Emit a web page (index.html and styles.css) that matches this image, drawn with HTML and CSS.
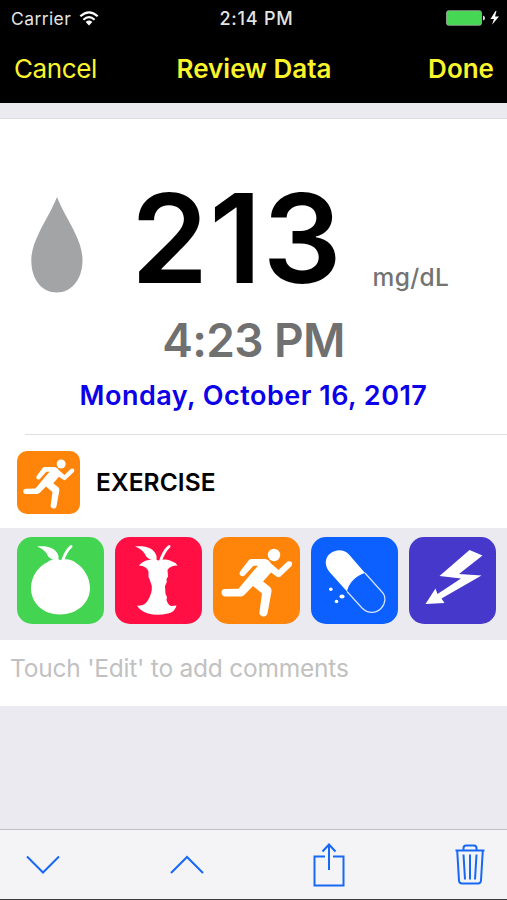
FILE: index.html
```
<!DOCTYPE html>
<html lang="en">
<head>
    <meta charset="UTF-8">
    <meta name="viewport" content="width=device-width, initial-scale=1.0">
    <title>Review Data</title>
    <link rel="stylesheet" href="styles.css">
</head>
<body>

    <!-- Shared runner icon -->
    <svg width="0" height="0" class="defs">
        <symbol id="runner" viewBox="0 0 87 87">
            <circle cx="61" cy="18" r="6.200"/>
            <path d="M38 22 L52 22 Q56 22.500 58 26.500 L65.500 33 L74.500 24.500 Q77 23.500 79 25.500 Q79.500 28 78 29.500 L67.500 39.500 Q65.500 41 63.500 39.500 L58 35.500 L50 44.500 L57 50 Q58.800 52 58.500 54.500 L54.500 76.500 Q53.500 80 49.500 79.500 Q46 78.500 46.500 75 L49 56.500 L40 49 L31.500 57.800 Q30 59.300 28 59.500 L12 59.500 Q8.500 59 8.500 55.500 Q8.500 52.300 12 52 L25.500 51.700 L39.500 35 L45 28.700 L40.500 28.700 L31.500 38.500 Q29.500 40 27.500 38.500 Q25.500 36.500 27.500 34 L35.500 23.500 Q36.500 22.200 38 22 Z"/>
        </symbol>
    </svg>

    <div class="status-bar">
        <div class="carrier">
            <span class="carrier-name">Carrier</span>
            <svg class="wifi" width="20" height="15" viewBox="0 0 20 15">
                <path d="M1.300 5.200 Q10 -2.600 18.700 5.200 M4.400 8.700 Q10 3.600 15.600 8.700" fill="none" stroke="#fff" stroke-width="2.200"/>
                <path d="M6.700 11 Q10 8.200 13.300 11 L10 14.400 Z" fill="#fff"/>
            </svg>
        </div>
        <span class="clock">2:14 PM</span>
        <svg class="battery" width="54" height="18" viewBox="0 0 54 18">
            <rect x="0.500" y="1.700" width="35" height="14.600" rx="2" fill="#46d755" stroke="#aeb8ae" stroke-width="0.700"/>
            <path d="M37 6.500 Q39 7 39 9 Q39 11 37 11.500 Z" fill="#ddd"/>
            <path d="M49.500 2 L44.500 9.900 L48 9.900 L46 15.800 L53 7.500 L49 7.500 L50.500 2 Z" fill="#fff"/>
        </svg>
    </div>

    <div class="nav-bar">
        <span class="cancel">Cancel</span>
        <span class="title">Review Data</span>
        <span class="done">Done</span>
    </div>

    <div class="card">
        <div class="reading">
            <svg class="drop" width="52" height="97" viewBox="0 0 52 97">
                <path d="M26 0 C31 13 39 25 44 36 C49 46 51.500 55 51.500 63 C51.500 83 40 95.500 26 95.500 C11 95.500 0.300 83 0.300 63 C0.300 55 3 46 8 36 C13 25 21 13 26 0 Z" fill="#a2a4a5"/>
            </svg>
            <span class="value">213</span>
            <span class="unit">mg/dL</span>
        </div>
        <div class="time"><span>4:23 PM</span></div>
        <div class="date"><span>Monday, October 16, 2017</span></div>
        <div class="divider"></div>
        <div class="event">
            <div class="tile small orange"><svg viewBox="0 0 87 87"><use href="#runner"/></svg></div>
            <span class="event-name">EXERCISE</span>
        </div>
    </div>

    <div class="palette">
        <div class="tile green">
            <svg viewBox="0 0 87 87">
                <path d="M43.500 23 C48 21.500 55 22 59 26 C66 30 73 40 73 51 C73 66 60 77.500 43 77.500 C26 77.500 14 66 14 51 C14 39 22 29 30 25.500 C34 22 39 21.500 43.500 23 Z"/>
                <path d="M20 9.500 C30 8.500 39 10.500 41.500 19 L41.500 24 C36 23 31 21 30 17 C27 13 24 11 20 9.500 Z"/>
                <path d="M44 24 Q47 14 53 8.500 Q55.500 7 55.500 10 Q50 15 47 24 Z"/>
            </svg>
        </div>
        <div class="tile red">
            <svg viewBox="0 0 87 87">
                <path d="M24 28.500 Q28 23.500 34 23 Q39 21.500 43.500 23.500 Q50 21.500 55 23.500 Q60 25 62.500 28.500 Q55 28.500 52.500 33 L53 39.500 L51.500 42 L51.800 45 L50 49 L50.500 57 L52 60 L51.500 63 Q53 68 56 69 L61.500 68.500 Q60 75 53 76.500 Q42 79 33 76.500 Q25 74 22 68.500 Q29 69.500 32.500 64 Q37.500 56 36.800 49 L34.500 42 L33.500 40 L33.500 34.500 Q31.500 29 24 28.500 Z"/>
                <path d="M20 9.500 C30 8.500 39 10.500 41.500 19 L41.500 24 C36 23 31 21 30 17 C27 13 24 11 20 9.500 Z"/>
                <path d="M44 24 Q47 14 53 8.500 Q55.500 7 55.500 10 Q50 15 47 24 Z"/>
            </svg>
        </div>
        <div class="tile orange"><svg viewBox="0 0 87 87"><use href="#runner"/></svg></div>
        <div class="tile blue">
            <svg viewBox="0 0 87 87">
                <path d="M36 54.500 L18.500 35 C12 27 15 19 20 16 C26 12 33 12.500 38 17.500 L54 36 C46 38 38 45 36 54.500 Z"/>
                <path d="M36 54.500 L51 71 C57 77 65 76.500 70 71.500 C75 66 75 59 71 55 L54 36" fill="none" stroke="#d6e4ff" stroke-width="1.200"/>
                <circle cx="19.800" cy="52.300" r="1.800"/>
                <ellipse cx="31" cy="59.500" rx="2.600" ry="2"/>
                <circle cx="25.500" cy="64.500" r="1.800"/>
            </svg>
        </div>
        <div class="tile purple">
            <svg viewBox="0 0 87 87">
                <path d="M60.500 13 L73.500 18.500 L50 37 L72.500 38.500 L32.500 61.500 L35.500 66 L16.500 67 L26.500 51.500 L28.500 57 L52 41.500 L30.500 39 Z"/>
            </svg>
        </div>
    </div>

    <div class="comments"><span>Touch 'Edit' to add comments</span></div>

    <div class="toolbar">
        <svg width="34" height="20" viewBox="0 0 34 20">
            <path d="M1 1.500 L17 17.500 L33 1.500"/>
        </svg>
        <svg width="34" height="20" viewBox="0 0 34 20">
            <path d="M1 18 L17 2 L33 18"/>
        </svg>
        <svg width="32" height="44" viewBox="0 0 32 44">
            <path d="M12 13.500 H1.500 V42.500 H30.500 V13.500 H20 M16 27 V1.500 M9.500 8.500 L16 1.500 L22.500 8.500"/>
        </svg>
        <svg width="30" height="42" viewBox="0 0 30 42">
            <path d="M0.500 6.500 H29.500 M2.200 6.500 L4 36.500 Q4.200 39.500 7 39.500 H23 Q25.700 39.500 26 36.500 L27.800 6.500 M8.500 6.500 V4 Q8.500 1.500 11 1.500 H19 Q21.500 1.500 21.500 4 V6.500 M8.500 10.500 L10 35.500 M15 10.500 V35.500 M21.500 10.500 L20 35.500"/>
        </svg>
    </div>

</body>
</html>
```
FILE: styles.css
```
html, body {
    height: 100%;
    margin: 0;
    padding: 0;
    overflow: hidden;
}

body {
    display: flex;
    flex-direction: column;
    font-family: 'Inter', 'Liberation Sans', sans-serif;
    background: #ebeaf0;
    color: #000;
    white-space: nowrap;
}

svg {
    display: block;
    flex: none;
}

.defs {
    position: absolute;
}

.status-bar {
    display: grid;
    grid-template-columns: 1fr auto 1fr;
    align-items: center;
    height: 36px;
    padding: 0 7px 0 11px;
    background: #000;
    color: #e4e4e4;
    font-size: 17.5px;
}

.carrier {
    display: flex;
    align-items: center;
    gap: 8px;
}

.carrier-name {
    letter-spacing: 0.4px;
}

.clock {
    margin-left: 2px;
    font-size: 18px;
    font-weight: 500;
    letter-spacing: 0.8px;
}

.battery {
    justify-self: end;
}

.nav-bar {
    display: grid;
    grid-template-columns: 1fr auto 1fr;
    align-items: center;
    height: 67px;
    padding: 0 13px 2px 14px;
    box-sizing: border-box;
    background: #000;
    color: #fbf42b;
    font-size: 26px;
}

.cancel {
    letter-spacing: -0.4px;
}

.title {
    font-weight: 600;
}

.done {
    justify-self: end;
    font-weight: 600;
}

.card {
    margin-top: 16px;
    padding-top: 59px;
    height: 350px;
    background: #fff;
    box-shadow: 0 -1px 0 #dddde1;
}

.reading {
    display: flex;
    height: 120px;
    padding-left: 31px;
}

.drop {
    margin-top: 19px;
}

.value {
    margin-left: 48px;
    font-size: 124px;
    font-weight: 600;
    line-height: 120px;
    letter-spacing: 1px;
}

.unit {
    margin: 84px 0 0 30px;
    font-size: 24.5px;
    font-weight: 500;
    line-height: 30px;
    letter-spacing: 0.3px;
    color: #737373;
}

.time {
    margin-top: 17px;
    font-size: 46px;
    font-weight: 600;
    line-height: 50px;
    letter-spacing: -0.6px;
    text-align: center;
    color: #707070;
}

.date {
    margin-top: 10px;
    font-size: 27px;
    font-weight: 600;
    line-height: 41px;
    letter-spacing: 0.48px;
    text-align: center;
    color: #0b00e8;
}

.divider {
    height: 1px;
    margin: 18px 0 0 25px;
    background: #dededf;
}

.event {
    display: flex;
    align-items: center;
    gap: 16px;
    height: 94px;
    padding-left: 17px;
}

.event-name {
    font-size: 24.5px;
    font-weight: 600;
    letter-spacing: 0.1px;
}

.tile {
    width: 87px;
    height: 87px;
    border-radius: 15px;
    fill: #fff;
}

.tile.small {
    width: 63px;
    height: 63px;
    border-radius: 10px;
}

.green { background: #43d551; }
.red { background: #ff0f43; }
.orange { background: #ff850a; }
.blue { background: #0b60ff; }
.purple { background: #4638cb; }

.palette {
    display: flex;
    gap: 11px;
    height: 103px;
    padding: 9.4px 0 0 16.5px;
}

.comments {
    height: 66px;
    padding: 0 10px;
    background: #fff;
    color: #c1c1c1;
    font-size: 24.5px;
    line-height: 57px;
    letter-spacing: -0.22px;
}

.toolbar {
    display: flex;
    align-items: center;
    justify-content: space-between;
    height: 71px;
    margin-top: auto;
    padding: 0 22px 0 26px;
    box-sizing: border-box;
    border-top: 1px solid #c3c2c7;
    border-bottom: 1px solid #3c3c3e;
    background: #f4f4f6;
}

.toolbar path {
    fill: none;
    stroke: #1768f5;
    stroke-width: 2;
}
```
